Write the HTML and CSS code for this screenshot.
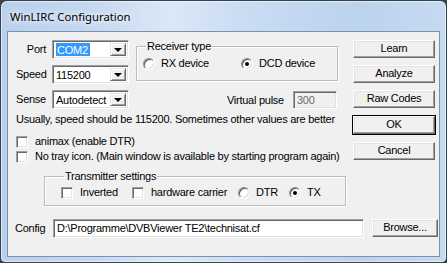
FILE: index.html
```html
<!DOCTYPE html>
<html lang="en">
<head>
  <meta charset="UTF-8">
  <title>WinLIRC Configuration</title>
  <link rel="stylesheet" href="styles.css">
</head>
<body>

  <div class="window">
    <div class="titlebar">
      <span class="title">WinLIRC Configuration</span>
    </div>

    <div class="client">
      <div class="main">
        <div class="left">
          <div class="top">
            <div class="fields">
              <span class="label">Port</span>
              <div class="combo">
                <span class="value"><span class="sel">COM2</span></span>
                <span class="drop"></span>
              </div>
              <span class="label">Speed</span>
              <div class="combo">
                <span class="value">115200</span>
                <span class="drop"></span>
              </div>
              <span class="label">Sense</span>
              <div class="combo">
                <span class="value">Autodetect</span>
                <span class="drop"></span>
              </div>
            </div>

            <div class="side">
              <fieldset class="group receiver">
                <legend>Receiver type</legend>
                <div class="options">
                  <span class="opt rx"><span class="radio"></span>RX device</span>
                  <span class="opt"><span class="radio on"></span>DCD device</span>
                </div>
              </fieldset>
              <div class="pulse">
                <span>Virtual pulse</span>
                <div class="edit disabled">300</div>
              </div>
            </div>
          </div>

          <p class="hint">Usually, speed should be 115200. Sometimes other values are better</p>

          <div class="check first"><span class="box"></span>animax (enable DTR)</div>
          <div class="check"><span class="box"></span>No tray icon. (Main window is available by starting program again)</div>

          <fieldset class="group transmitter">
            <legend>Transmitter settings</legend>
            <div class="options">
              <span class="opt inv"><span class="box"></span>Inverted</span>
              <span class="opt hw"><span class="box"></span>hardware carrier</span>
              <span class="opt dtr"><span class="radio"></span>DTR</span>
              <span class="opt"><span class="radio on"></span>TX</span>
            </div>
          </fieldset>
        </div>

        <div class="buttons">
          <div class="button">Learn</div>
          <div class="button">Analyze</div>
          <div class="button">Raw Codes</div>
          <div class="button default">OK</div>
          <div class="button">Cancel</div>
        </div>
      </div>

      <div class="config">
        <span class="config-label">Config</span>
        <div class="edit path">D:\Programme\DVBViewer TE2\technisat.cf</div>
        <div class="button browse">Browse...</div>
      </div>
    </div>
  </div>

</body>
</html>
```

FILE: styles.css
```css
body {
  margin: 0;
  background: #3b444e;
  font-family: 'Liberation Sans', Arial, sans-serif;
  font-size: 11px;
  line-height: 13px;
  letter-spacing: -0.25px;
  color: #000;
}

.window {
  width: 447px;
  height: 263px;
  box-sizing: border-box;
  border: 1px solid #34414f;
  border-radius: 7px 7px 5px 5px;
  background: linear-gradient(to right, #b9d0ec 0%, #c4d8f0 20%, #dbe8f7 38%, #c9dcf2 55%, #bcd3ee 80%, #c6daf1 100%);
  box-shadow: inset 0 0 0 1px rgba(255, 255, 255, 0.55);
}

.titlebar {
  height: 30px;
  padding: 8px 0 0 9px;
  box-sizing: border-box;
}

.title {
  font-family: 'Noto Sans', 'Open Sans', sans-serif;
  font-size: 11.3px;
  line-height: 16px;
  letter-spacing: 0;
  text-shadow: 0 0 6px #fff, 0 0 10px #fff;
}

.client {
  width: 433px;
  height: 226px;
  margin-left: 6px;
  box-sizing: border-box;
  border: 1px solid #7c91ab;
  background: #f0f0f0;
  padding: 8px 0 0 8px;
}

.main {
  display: flex;
  align-items: flex-start;
}

.left {
  width: 329px;
}

.top {
  display: flex;
  align-items: flex-start;
}

.fields {
  display: grid;
  grid-template-columns: 30px 77px;
  column-gap: 6px;
  row-gap: 6px;
}

.label {
  text-align: right;
  line-height: 19px;
}

/* sunken 3d edit look */
.combo,
.edit {
  height: 19px;
  box-sizing: border-box;
  border: 1px solid;
  border-color: #a0a0a0 #fff #fff #a0a0a0;
  box-shadow: inset 1px 1px #696969, inset -1px -1px #e3e3e3;
  background: #fff;
}

.combo {
  display: flex;
  padding: 2px;
}

.value {
  flex: 1;
  padding-left: 1px;
  line-height: 15px;
  white-space: nowrap;
  overflow: hidden;
}

.sel {
  background: #3399ff;
  color: #fff;
  padding: 1px 2px 1px 1px;
}

.drop {
  width: 16px;
  box-sizing: border-box;
  border: 1px solid;
  border-color: #e3e3e3 #696969 #696969 #e3e3e3;
  box-shadow: inset 1px 1px #fff, inset -1px -1px #a0a0a0;
  background: #f0f0f0;
  display: flex;
  align-items: center;
  justify-content: center;
}

.drop::after {
  content: "";
  border-left: 4px solid transparent;
  border-right: 4px solid transparent;
  border-top: 4px solid #000;
  margin-top: 1px;
}

.side {
  width: 202px;
  margin-left: 7px;
}

.group {
  margin: 0;
  padding: 4px 6px 10px;
  border: 1px solid #b8bdc3;
  box-shadow: 1px 1px #fff, inset 1px 1px #fff;
  min-width: 0;
}

.group legend {
  padding: 0 1px;
  margin-left: 3px;
}

.options {
  display: flex;
  align-items: center;
}

.opt {
  display: flex;
  align-items: center;
  white-space: nowrap;
}

.receiver .rx {
  width: 98px;
}

.radio {
  width: 12px;
  height: 12px;
  box-sizing: border-box;
  border-radius: 50%;
  border: 1px solid;
  border-color: #8a8a8a #ffffff #ffffff #8a8a8a;
  box-shadow: inset 1px 1px #5a5a5a, inset -1px -1px #dcdcdc;
  background: #fff;
  margin-right: 6px;
  display: flex;
  align-items: center;
  justify-content: center;
}

.radio.on::after {
  content: "";
  width: 4px;
  height: 4px;
  border-radius: 50%;
  background: #000;
}

.box {
  width: 12px;
  height: 12px;
  box-sizing: border-box;
  border: 1px solid;
  border-color: #a0a0a0 #fff #fff #a0a0a0;
  box-shadow: inset 1px 1px #696969, inset -1px -1px #e3e3e3;
  background: #fff;
  margin-right: 7px;
  flex: none;
}

.pulse {
  display: flex;
  justify-content: flex-end;
  align-items: center;
  margin: 10px 1px 0 0;
}

.pulse span {
  margin-right: 9px;
}

.edit {
  padding: 2px 3px;
  line-height: 13px;
  white-space: nowrap;
}

.edit.disabled {
  width: 44px;
  height: 18px;
  background: #f0f0f0;
  color: #6d6d6d;
}

.hint {
  margin: 4px 0 0;
  white-space: nowrap;
}

.check {
  display: flex;
  align-items: center;
  margin-top: 2px;
  white-space: nowrap;
}

.check.first {
  margin-top: 9px;
}

.transmitter {
  margin: 7px 0 0 28px;
  width: 302px;
  box-sizing: border-box;
  padding: 3px 6px 6px 16px;
}

.transmitter .inv {
  width: 71px;
}

.transmitter .hw {
  width: 106px;
}

.transmitter .dtr {
  width: 51px;
}

.buttons {
  display: flex;
  flex-direction: column;
  gap: 7px;
  margin: 0 0 0 8px;
}

/* raised 3d button */
.button {
  width: 82px;
  height: 18px;
  box-sizing: border-box;
  border: 1px solid;
  border-color: #fff #696969 #696969 #fff;
  box-shadow: inset -1px -1px #a0a0a0, inset 1px 1px #e3e3e3;
  background: #f0f0f0;
  text-align: center;
  line-height: 15px;
}

.button.default {
  outline: 1px solid #000;
  margin: 1px 0;
}

.config {
  display: flex;
  align-items: center;
  margin-top: 13px;
}

.config-label {
  width: 38px;
  margin-left: -1px;
}

.edit.path {
  width: 311px;
}

.button.browse {
  width: 66px;
  margin: -1px 0 0 8px;
}
```
